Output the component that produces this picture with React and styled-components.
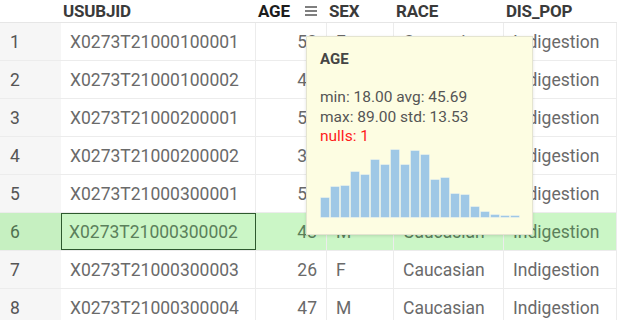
import React from "react";
import styled, { createGlobalStyle } from "styled-components";

const GlobalStyle = createGlobalStyle`
    html, body {
        margin: 0;
        padding: 0;
        background: #ffffff;
        overflow: hidden;
    }
    body {
        font-family: Roboto, "Liberation Sans", sans-serif;
    }
`;

const COLUMNS = "61px 195px 71px 67px 110px 1fr";

const Container = styled.div`
    position: relative;
    width: 617px;
    height: 320px;
    overflow: hidden;
`;

const HeaderRow = styled.div`
    display: grid;
    grid-template-columns: ${COLUMNS};
    height: 22px;
    border-bottom: 1px solid #e6e6e6;
`;

const HeaderCell = styled.div`
    display: flex;
    align-items: center;
    justify-content: space-between;
    padding: 0 10px 0 2px;
    font-size: 17px;
    font-weight: 700;
    color: ${(p) => (p.$active ? "#1c1c1c" : "#3a3a3a")};
    letter-spacing: -0.2px;
`;

const Row = styled.div`
    display: grid;
    grid-template-columns: ${COLUMNS};
    height: 37px;
    border-bottom: 1px solid #ececec;
    background: ${(p) => (p.$selected ? "#cbf6c6" : "#ffffff")};
`;

const Cell = styled.div`
    display: flex;
    align-items: center;
    justify-content: ${(p) => (p.$right ? "flex-end" : "flex-start")};
    padding: 0 9px;
    font-size: 17.5px;
    color: ${(p) => (p.$selected ? "#5b805b" : "#6a6a6a")};
    border-right: 1px solid #ececec;
    white-space: nowrap;
    overflow: hidden;
    box-sizing: border-box;
`;

const IndexCell = styled(Cell)`
    padding-left: 10px;
    background: ${(p) => (p.$selected ? "#c6f0c1" : "#f6f6f6")};
    color: ${(p) => (p.$selected ? "#4f704f" : "#555555")};
    border-right: none;
`;

const FocusCell = styled(Cell)`
    outline: 1px solid #2e5a2e;
    outline-offset: -1px;
    padding-left: 8px;
`;

const Tooltip = styled.div`
    position: absolute;
    left: 306px;
    top: 36px;
    width: 227px;
    height: 199px;
    box-sizing: border-box;
    padding: 13px 13px 0 13px;
    background: #fdfde2;
    border: 1px solid #e4e4d0;
    box-shadow: 0 1px 3px rgba(0, 0, 0, 0.12);
`;

const TipTitle = styled.div`
    font-size: 15px;
    font-weight: 700;
    color: #454545;
    line-height: 18px;
    margin-bottom: 20px;
`;

const TipLine = styled.div`
    font-size: 15.5px;
    line-height: 19.5px;
    color: ${(p) => (p.$alert ? "#ff1a1a" : "#555555")};
`;

const Histogram = styled.div`
    display: flex;
    align-items: flex-end;
    gap: 2px;
    height: 67px;
    margin-top: 3px;
    margin-left: 1px;
`;

const Bar = styled.div`
    width: 8px;
    background: #9fc8e6;
    box-shadow: 0 0 0 0.5px #c6def0;
`;

const MenuIcon = () => (
    <svg width="12" height="10" viewBox="0 0 12 10">
        <path d="M0 1h12M0 5h12M0 9h12" stroke="#555" strokeWidth="1.6" />
    </svg>
);

const rows = [
    ["1", "X0273T21000100001", "52", "F", "Caucasian", "Indigestion"],
    ["2", "X0273T21000100002", "48", "M", "Caucasian", "Indigestion"],
    ["3", "X0273T21000200001", "55", "F", "Caucasian", "Indigestion"],
    ["4", "X0273T21000200002", "33", "M", "Caucasian", "Indigestion"],
    ["5", "X0273T21000300001", "57", "F", "Caucasian", "Indigestion"],
    ["6", "X0273T21000300002", "43", "M", "Caucasian", "Indigestion"],
    ["7", "X0273T21000300003", "26", "F", "Caucasian", "Indigestion"],
    ["8", "X0273T21000300004", "47", "M", "Caucasian", "Indigestion"],
];

const bins = [19, 30, 31, 45, 42, 57, 52, 67, 52, 66, 62, 37, 39, 23, 22, 10, 5, 2, 1, 1];

const App = () => {
    return (
        <Container>
            <GlobalStyle />
            <HeaderRow>
                <HeaderCell />
                <HeaderCell>{"USUBJID"}</HeaderCell>
                <HeaderCell $active>
                    {"AGE"}
                    <MenuIcon />
                </HeaderCell>
                <HeaderCell>{"SEX"}</HeaderCell>
                <HeaderCell>{"RACE"}</HeaderCell>
                <HeaderCell>{"DIS_POP"}</HeaderCell>
            </HeaderRow>
            {rows.map((r) => {
                const selected = r[0] === "6";
                return (
                    <Row key={r[0]} $selected={selected}>
                        <IndexCell $selected={selected}>{r[0]}</IndexCell>
                        {selected ? (
                            <FocusCell $selected>{r[1]}</FocusCell>
                        ) : (
                            <Cell>{r[1]}</Cell>
                        )}
                        <Cell $right $selected={selected}>{r[2]}</Cell>
                        <Cell $selected={selected}>{r[3]}</Cell>
                        <Cell $selected={selected}>{r[4]}</Cell>
                        <Cell $selected={selected}>{r[5]}</Cell>
                    </Row>
                );
            })}
            <Tooltip>
                <TipTitle>{"AGE"}</TipTitle>
                <TipLine>{"min: 18.00 avg: 45.69"}</TipLine>
                <TipLine>{"max: 89.00 std: 13.53"}</TipLine>
                <TipLine $alert>{"nulls: 1"}</TipLine>
                <Histogram>
                    {bins.map((h, i) => (
                        <Bar key={i} style={{ height: h }} />
                    ))}
                </Histogram>
            </Tooltip>
        </Container>
    );
};

export default App;
